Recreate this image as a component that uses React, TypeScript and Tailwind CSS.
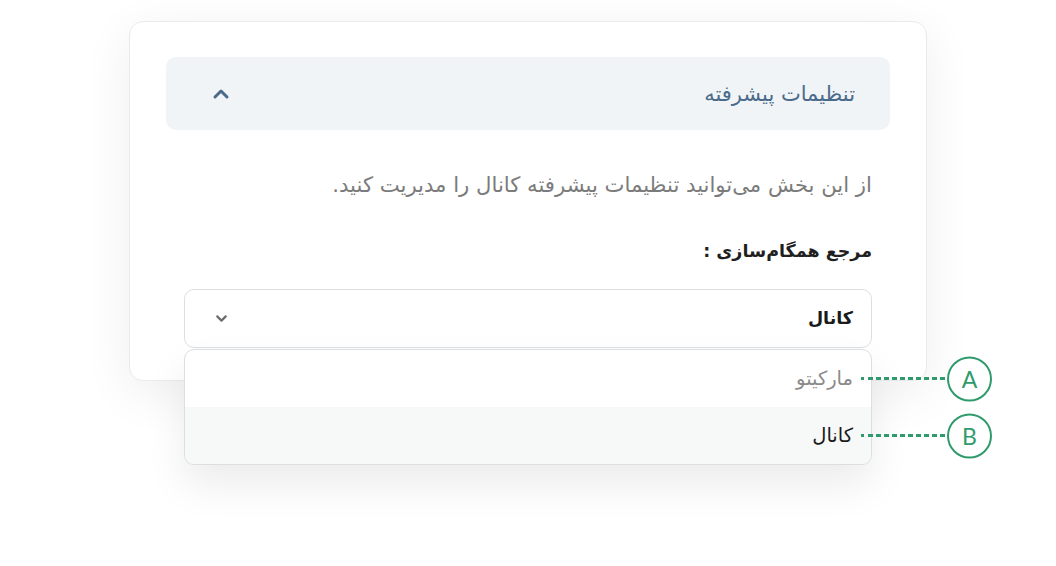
import { ChevronUp, ChevronDown } from "lucide-react";

function Marker({ letter }: { letter: string }) {
  return (
    <div className="absolute left-[calc(100%-10px)] top-1/2 -translate-y-1/2 flex items-center" dir="ltr">
      <svg width="86" height="6" viewBox="0 0 86 6">
        <line x1="0" y1="3" x2="86" y2="3" stroke="#2f9b6c" strokeWidth="3" strokeDasharray="3 4 5 3 5 3 5 3 5 3 5 3 5 3 5 3 5 3 5 3 5 3" />
      </svg>
      <div className="w-[45px] h-[45px] rounded-full border-2 border-[#2f9b6c] bg-white flex items-center justify-center text-[#2f9b6c] text-[23px] font-[Lato,sans-serif]">
        {letter}
      </div>
    </div>
  );
}

export default function App() {
  const options = [
    { label: "مارکیتو", letter: "A", muted: true },
    { label: "کانال", letter: "B", muted: false },
  ];

  return (
    <div className="w-[1056px] h-[566px] bg-white overflow-hidden pt-[21px] font-['DejaVu_Sans',sans-serif]" dir="rtl">
      <div className="ml-[129px] mr-auto w-[798px] rounded-[14px] border border-[#e8ebed] bg-white shadow-[0_12px_50px_rgba(0,0,0,0.07)] pt-[35px] px-[36px] pb-[32px]">
        {/* Accordion header */}
        <div className="h-[73px] rounded-[10px] bg-[#f1f4f6] flex items-center justify-between pr-[35px] pl-[43px]">
          <span className="text-[21px] leading-[26px] text-[#4a6a8c]">تنظیمات پیشرفته</span>
          <ChevronUp size={24} strokeWidth={3} className="text-[#4a6a8c]" />
        </div>

        <div className="px-[18px]">
          <p className="mt-[42px] text-[21.2px] leading-[26px] text-[#7b7b7b]">
            از این بخش می‌توانید تنظیمات پیشرفته کانال را مدیریت کنید.
          </p>
          <p className="mt-[40px] text-[17.5px] leading-[26px] font-semibold text-[#1f1f1f]">
            مرجع همگام‌سازی :
          </p>

          {/* Select */}
          <div className="relative mt-[25px]">
            <div className="h-[59px] rounded-[10px] border border-[#dcdfe1] bg-white flex items-center justify-between pr-[18px] pl-[28px]">
              <span className="text-[17.5px] font-semibold text-[#1a1a1a]">کانال</span>
              <ChevronDown size={17} strokeWidth={3} className="text-[#6b6b6b]" />
            </div>

            {/* Dropdown menu */}
            <div className="absolute left-0 right-0 top-full mt-[1px] rounded-[10px] border border-[#dcdfe1] bg-white shadow-[0_20px_40px_rgba(0,0,0,0.08)]">
              {options.map((opt, i) => (
                <div
                  key={opt.letter}
                  className={
                    "relative h-[57px] flex items-center pr-[18px] " +
                    (i === 1 ? "bg-[#f7f8f8] rounded-b-[10px]" : "rounded-t-[10px]")
                  }
                >
                  <span className={"text-[19.5px] " + (opt.muted ? "text-[#8a8a8a]" : "text-[#1a1a1a]")}>{opt.label}</span>
                  <Marker letter={opt.letter} />
                </div>
              ))}
            </div>
          </div>
        </div>
      </div>
    </div>
  );
}
